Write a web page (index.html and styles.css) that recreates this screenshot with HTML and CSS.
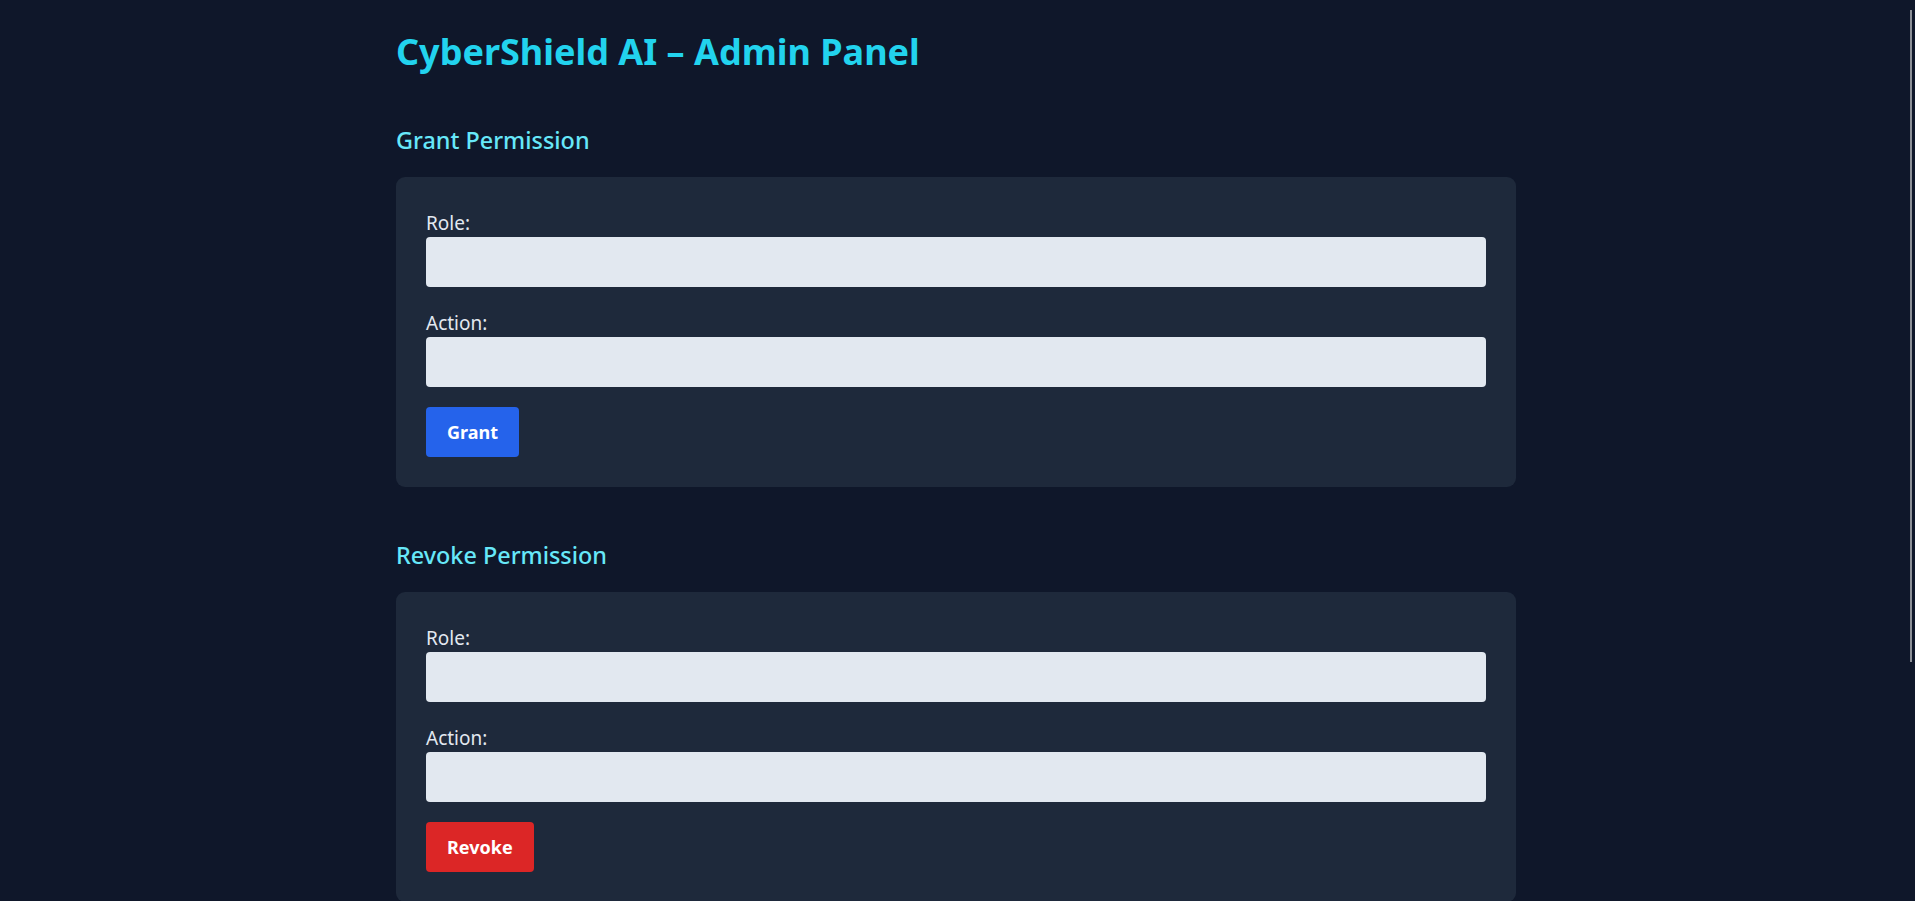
FILE: index.html
```html
<!DOCTYPE html>
<html lang="en">
<head>
<meta charset="utf-8">
<title>CyberShield AI – Admin Panel</title>
<link rel="stylesheet" href="styles.css">
</head>
<body>
<main class="page">
  <h1 class="title">CyberShield AI – Admin Panel</h1>

  <section class="section">
    <h2 class="section-title">Grant Permission</h2>
    <form class="card">
      <label class="field-label" for="grant-role">Role:</label>
      <input class="field-input" id="grant-role" type="text">
      <label class="field-label" for="grant-action">Action:</label>
      <input class="field-input" id="grant-action" type="text">
      <button class="btn btn-grant" type="button">Grant</button>
    </form>
  </section>

  <section class="section">
    <h2 class="section-title">Revoke Permission</h2>
    <form class="card">
      <label class="field-label" for="revoke-role">Role:</label>
      <input class="field-input" id="revoke-role" type="text">
      <label class="field-label" for="revoke-action">Action:</label>
      <input class="field-input" id="revoke-action" type="text">
      <button class="btn btn-revoke" type="button">Revoke</button>
    </form>
  </section>
</main>
<div class="scroll-thumb" aria-hidden="true"></div>
</body>
</html>
```

FILE: styles.css
```css
html {
  background: #0f172a;
}

body {
  margin: 0;
  background: #0f172a;
  color: #e2e8f0;
  font-family: "Noto Sans", "Open Sans", sans-serif;
  font-size: 16px;
}

.page {
  width: 1120px;
  margin: 0 auto;
  padding: 32px 3px 740px 0;
  box-sizing: content-box;
}

.title {
  margin: 0;
  font-size: 36px;
  line-height: 40px;
  font-weight: 700;
  color: #22d3ee;
}

.section {
  margin-top: 52px;
}

.section-title {
  margin: 0 0 21px;
  font-size: 23.4px;
  line-height: 32px;
  font-weight: 500;
  color: #67e8f9;
}

.card {
  display: flex;
  flex-direction: column;
  align-items: flex-start;
  padding: 30px;
  background: #1e293b;
  border-radius: 9px;
}

.field-label {
  display: block;
  padding-top: 6px;
  margin-bottom: 4px;
  line-height: 20px;
  font-size: 19px;
  color: #e2e8f0;
}

.field-input {
  align-self: stretch;
  height: 50px;
  box-sizing: border-box;
  margin: 0 0 20px;
  padding: 0 12px;
  border: none;
  border-radius: 4px;
  background: #e2e8f0;
  font: inherit;
  color: #0f172a;
}

.btn {
  height: 50px;
  padding: 0 21px;
  border: none;
  border-radius: 4px;
  font-family: inherit;
  font-size: 18px;
  font-weight: 700;
  color: #ffffff;
  cursor: pointer;
}

.btn-grant {
  background: #2563eb;
}

.btn-revoke {
  background: #dc2626;
}

.scroll-thumb {
  position: fixed;
  top: 10px;
  right: 3px;
  width: 2px;
  height: 652px;
  background: #8b8f97;
}
```
